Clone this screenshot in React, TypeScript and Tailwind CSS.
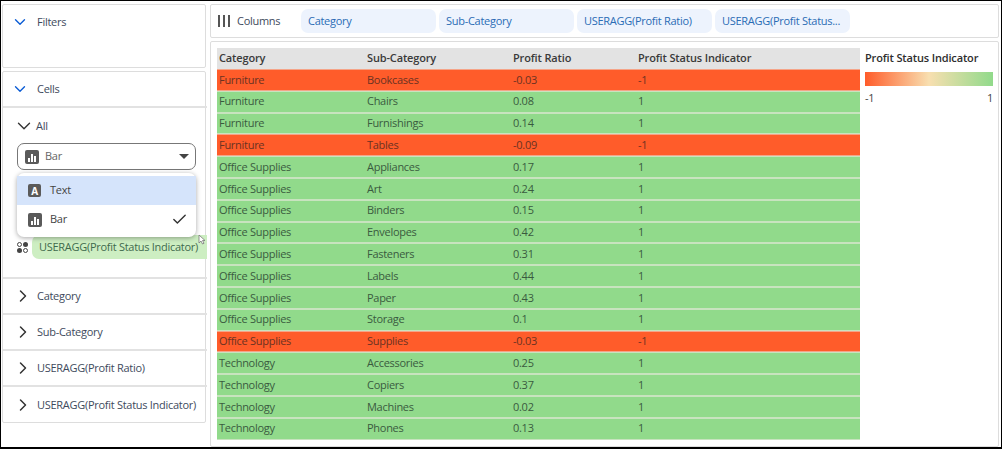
import { Check, ChevronDown, ChevronRight } from "lucide-react";

const rows = [
  ["Furniture", "Bookcases", "-0.03", "-1"],
  ["Furniture", "Chairs", "0.08", "1"],
  ["Furniture", "Furnishings", "0.14", "1"],
  ["Furniture", "Tables", "-0.09", "-1"],
  ["Office Supplies", "Appliances", "0.17", "1"],
  ["Office Supplies", "Art", "0.24", "1"],
  ["Office Supplies", "Binders", "0.15", "1"],
  ["Office Supplies", "Envelopes", "0.42", "1"],
  ["Office Supplies", "Fasteners", "0.31", "1"],
  ["Office Supplies", "Labels", "0.44", "1"],
  ["Office Supplies", "Paper", "0.43", "1"],
  ["Office Supplies", "Storage", "0.1", "1"],
  ["Office Supplies", "Supplies", "-0.03", "-1"],
  ["Technology", "Accessories", "0.25", "1"],
  ["Technology", "Copiers", "0.37", "1"],
  ["Technology", "Machines", "0.02", "1"],
  ["Technology", "Phones", "0.13", "1"],
];

const columns = ["Category", "Sub-Category", "USERAGG(Profit Ratio)", "USERAGG(Profit Status..."];
const fields = ["Category", "Sub-Category", "USERAGG(Profit Ratio)", "USERAGG(Profit Status Indicator)"];

function BarIcon() {
  return (
    <span className="flex h-[14px] w-[14px] items-end justify-center gap-px rounded-[2px] bg-[#5a5a5a] pb-[2px]">
      <span className="h-[4px] w-[2px] bg-white" />
      <span className="h-[8px] w-[2px] bg-white" />
      <span className="h-[6px] w-[2px] bg-white" />
    </span>
  );
}

function Cursor() {
  return (
    <svg width="8" height="11" viewBox="0 0 8 11" className="absolute left-[197px] top-[233px]">
      <path d="M1 1v8l2-2 1.500 3 1.500-.7L4.500 6.500H7z" fill="#fff" stroke="#777" strokeWidth="0.8" />
    </svg>
  );
}

export default function App() {
  return (
    <div className="relative h-[449px] w-[1002px] overflow-hidden border border-b-2 border-black bg-white font-['Open_Sans',sans-serif] text-[11px] tracking-[-0.28px] text-[#3e4a5c]">
      <div className="flex h-full gap-[4px] pl-px pr-[2px] pt-[3px]">
        <aside className="flex w-[204px] shrink-0 flex-col gap-[3px]">
          <section className="h-[64px] rounded-[2px] border border-[#dddddd]">
            <div className="flex h-[34px] items-center pl-[7.500px]">
              <ChevronDown size={18} strokeWidth={1.8} className="text-[#0b5cd5]" />
              <span className="ml-[8.500px]">Filters</span>
            </div>
          </section>

          <section className="relative h-[352px] rounded-[2px] border border-[#dddddd]">
            <div className="-mr-[2px] flex h-[36px] items-center border-b-2 border-[#e2e2e2] pl-[7.500px]">
              <ChevronDown size={18} strokeWidth={1.8} className="text-[#0b5cd5]" />
              <span className="ml-[8.500px]">Cells</span>
            </div>
            <div className="-mr-[2px] h-[171px] border-b-2 border-[#e2e2e2]">
              <div className="flex h-[35px] items-center pl-[9.500px] pt-[1px]">
                <ChevronDown size={22} strokeWidth={1.5} className="text-[#333333]" />
                <span className="ml-[1.500px]">All</span>
              </div>
              <div className="ml-[14px] flex h-[27px] w-[179px] items-center rounded-[7px] border border-[#777777] pl-[7px] pr-[6px] text-[#666666]">
                <BarIcon />
                <span className="ml-[6px] flex-1">Bar</span>
                <span className="h-0 w-0 border-x-[5px] border-t-[5px] border-x-transparent border-t-[#444444]" />
              </div>
              <div className="ml-[14px] mt-[65px] flex items-center">
                <span className="grid h-[11px] w-[11px] grid-cols-2 gap-px">
                  <span className="rounded-full border border-[#444444]" />
                  <span className="rounded-full bg-[#444444]" />
                  <span className="rounded-full bg-[#444444]" />
                  <span className="rounded-full border border-[#444444]" />
                </span>
                <span className="ml-[4px] flex h-[24px] flex-1 items-center whitespace-nowrap rounded-l-[7px] bg-[#cdeec2] pl-[7px] text-[#3f6a4d]">
                  USERAGG(Profit Status Indicator)
                </span>
              </div>
            </div>
            {fields.map((field, i) => (
              <div
                key={field}
                className={`-mr-[2px] flex h-[36px] items-center whitespace-nowrap pl-[9.500px] ${i < 3 ? "border-b-2 border-[#e2e2e2]" : ""}`}
              >
                <ChevronRight size={20} strokeWidth={1.8} className="text-[#333333]" />
                <span className="ml-[4.500px]">{field}</span>
              </div>
            ))}
          </section>
        </aside>

        <main className="flex min-w-0 flex-1 flex-col gap-[3px]">
          <div className="flex h-[34px] items-center rounded-[2px] border border-[#dddddd] pl-[7px]">
            <span className="flex h-[12px] gap-[3px]">
              <span className="w-[2px] bg-[#555555]" />
              <span className="w-[2px] bg-[#555555]" />
              <span className="w-[2px] bg-[#555555]" />
            </span>
            <span className="ml-[7px] w-[64px]">Columns</span>
            <div className="flex gap-[3px]">
              {columns.map((col) => (
                <span
                  key={col}
                  className="flex h-[24px] w-[135px] items-center whitespace-nowrap rounded-[7px] bg-[#edf3fd] pl-[7px] text-[#2a6cb5]"
                >
                  {col}
                </span>
              ))}
            </div>
          </div>

          <div className="flex min-h-0 flex-1 rounded-[2px] border border-[#dddddd] pl-[6px] pt-[6px]">
            <div className="w-[643px] shrink-0 text-[#3d4a3d]">
              <div className="grid h-[21px] grid-cols-[148px_146px_125px_1fr] items-center bg-[#e3e3e3] font-semibold tracking-[-0.15px] text-[#3a3a3a]">
                <span className="pl-[2px]">Category</span>
                <span className="pl-[2px]">Sub-Category</span>
                <span className="pl-[2px]">Profit Ratio</span>
                <span className="pl-[2px]">Profit Status Indicator</span>
              </div>
              {rows.map((row) => {
                const negative = row[3] === "-1";
                return (
                  <div
                    key={row[1]}
                    className={`grid h-[21.800px] grid-cols-[148px_146px_125px_1fr] items-center border-y ${
                      negative
                        ? "border-[#f5a488] bg-[#ff5c2a] text-[#6b3222]"
                        : "border-[#c8e3bf] bg-[#91da8b] text-[#3a5a3f]"
                    }`}
                  >
                    {row.map((cell, i) => (
                      <span key={i} className="pl-[2px]">
                        {cell}
                      </span>
                    ))}
                  </div>
                );
              })}
            </div>

            <div className="ml-[5px] w-[128px] shrink-0 pt-[2px]">
              <p className="font-semibold tracking-[-0.15px] text-[#2e2e2e]">Profit Status Indicator</p>
              <div className="mt-[5px] h-[14px] bg-[linear-gradient(90deg,#ff5c2a_0%,#f8dfb0_50%,#91da8b_100%)]" />
              <div className="mt-[4px] flex justify-between text-[#444444]">
                <span>-1</span>
                <span>1</span>
              </div>
            </div>
          </div>
        </main>
      </div>

      <div className="absolute left-[16px] top-[172px] w-[179px] rounded-[7px] bg-white py-[3px] text-[#444444] shadow-[0_1px_5px_rgba(0,0,0,0.35)]">
        <div className="flex h-[29px] items-center bg-[#d5e4fb] pl-[11px]">
          <span className="flex h-[13px] w-[13px] items-center justify-center rounded-[2px] bg-[#5a5a5a] text-[10px] font-bold leading-none text-white">
            A
          </span>
          <span className="ml-[9px]">Text</span>
        </div>
        <div className="flex h-[29px] items-center pl-[11px] pr-[8px]">
          <BarIcon />
          <span className="ml-[8px] flex-1">Bar</span>
          <Check size={17} strokeWidth={2} className="text-[#333333]" />
        </div>
      </div>
      <Cursor />
    </div>
  );
}
